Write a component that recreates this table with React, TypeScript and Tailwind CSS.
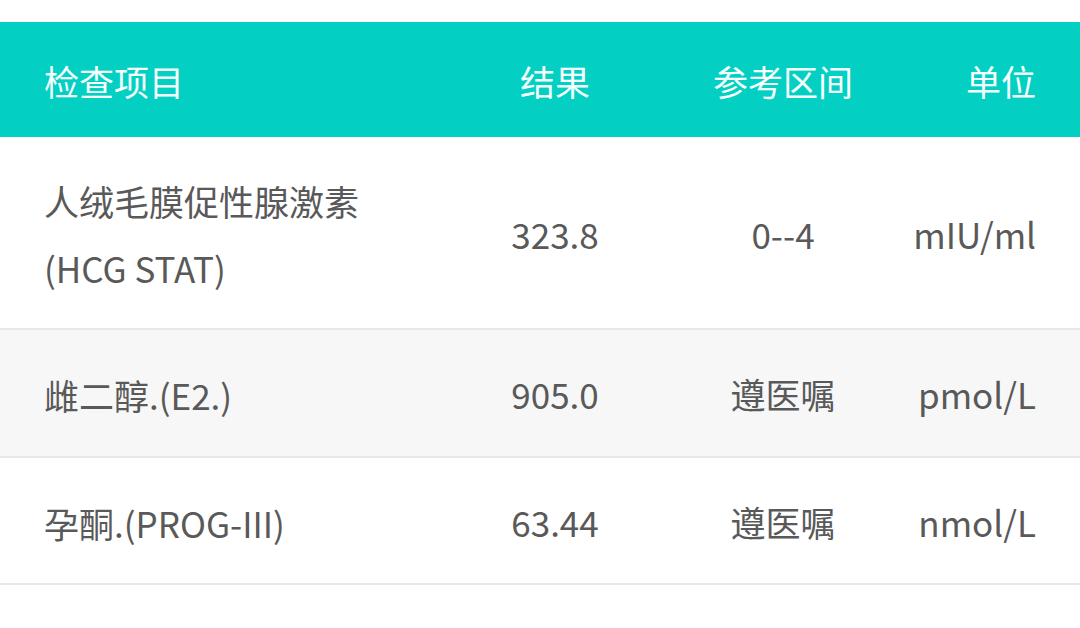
import React from "react";

interface Row {
  name: string[];
  result: string;
  range: string;
  unit: string;
  bg: string;
  h: string;
}

const rows: Row[] = [
  { name: ["人绒毛膜促性腺激素", "(HCG STAT)"], result: "323.8", range: "0--4", unit: "mIU/ml", bg: "bg-white", h: "h-[193px]" },
  { name: ["雌二醇.(E2.)"], result: "905.0", range: "遵医嘱", unit: "pmol/L", bg: "bg-[#f7f7f7]", h: "h-[128px]" },
  { name: ["孕酮.(PROG-III)"], result: "63.44", range: "遵医嘱", unit: "nmol/L", bg: "bg-white", h: "h-[127px]" },
];

const cols = "grid grid-cols-[400px_222px_234px_1fr] items-center px-[44px]";

export default function App() {
  return (
    <div
      className="w-[1080px] h-[628px] bg-white overflow-hidden pt-[22px]"
      style={{ fontFamily: '"Noto Sans CJK SC", "Noto Sans", sans-serif' }}
    >
      <div className={`${cols} h-[115px] bg-[#04cfc3] text-[#f4fffe] text-[35px] pt-[3px]`}>
        <span>检查项目</span>
        <span className="text-center">结果</span>
        <span className="text-center">参考区间</span>
        <span className="text-right">单位</span>
      </div>
      {rows.map((r) => (
        <div key={r.result} className={`${cols} ${r.h} ${r.bg} border-b-2 border-[#e8e8e8] text-[#595959] text-[35px] pt-[3px]`}>
          <div className="leading-[67px]">
            {r.name.map((n) => (
              <div key={n}>{n}</div>
            ))}
          </div>
          <span className="text-center">{r.result}</span>
          <span className="text-center">{r.range}</span>
          <span className="text-right">{r.unit}</span>
        </div>
      ))}
    </div>
  );
}
